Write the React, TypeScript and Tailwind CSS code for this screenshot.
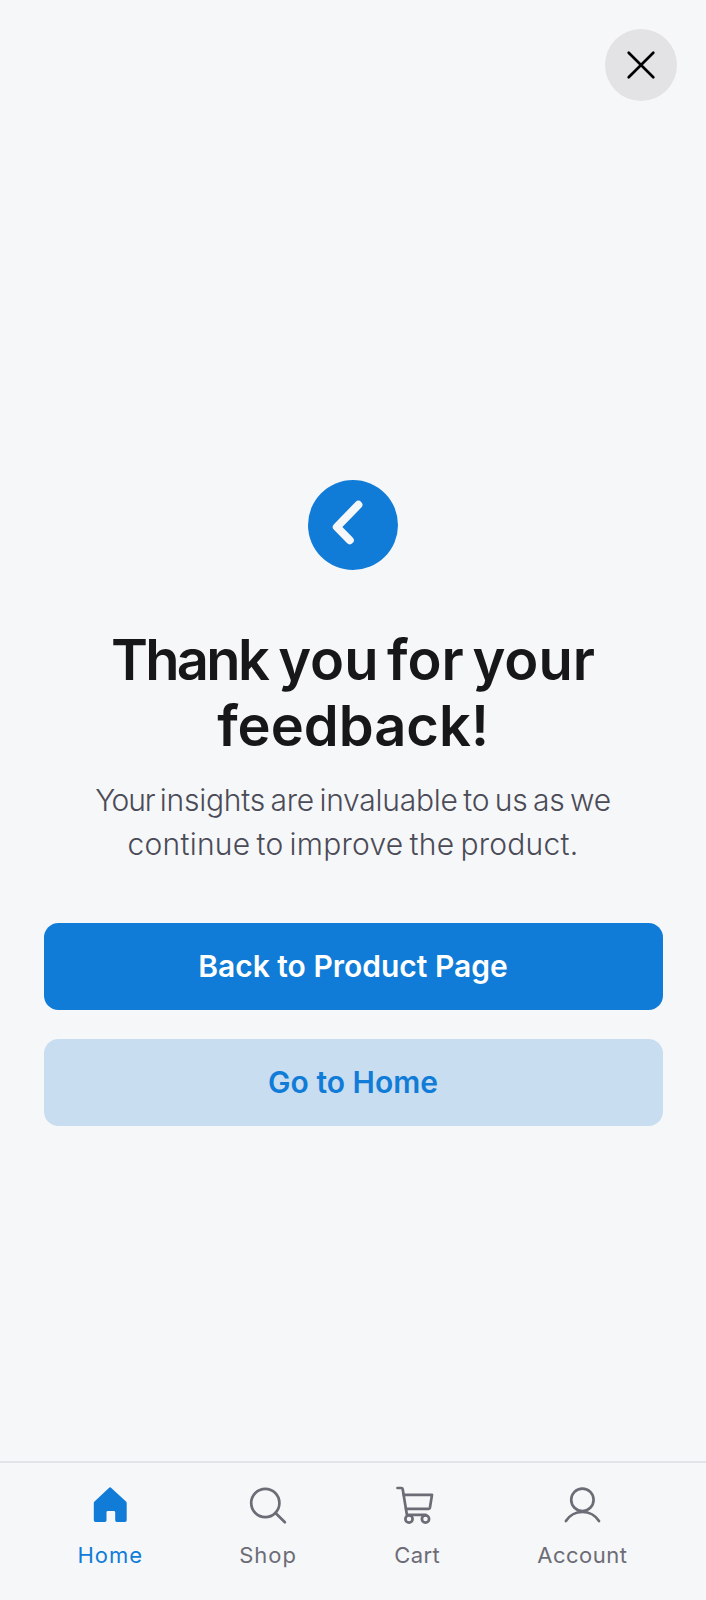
import React from 'react';

const stroke = {
  fill: 'none',
  stroke: 'currentColor',
  strokeWidth: 2.7,
  strokeLinecap: 'round' as const,
  strokeLinejoin: 'round' as const,
};

function HomeIcon() {
  return (
    <svg className="h-12 w-12" viewBox="0 0 48 48" fill="currentColor">
      <path d="M22.9 6.9a1.8 1.8 0 0 1 2.4 0L40 20.6q.7.7.7 1.7v17q0 1.7-1.7 1.7h-8.1q-1.7 0-1.7-1.7v-8q0-1.3-1.3-1.3h-6.1q-1.3 0-1.3 1.3v8q0 1.7-1.7 1.7H9.5q-1.7 0-1.7-1.7v-17q0-1 .7-1.7Z" />
    </svg>
  );
}

function SearchIcon() {
  return (
    <svg className="h-12 w-12" viewBox="0 0 48 48" {...stroke}>
      <circle cx="21.3" cy="22" r="14.1" />
      <path d="m31.5 32 9.4 9.2" />
    </svg>
  );
}

function CartIcon() {
  return (
    <svg className="h-12 w-12" viewBox="0 0 48 48" {...stroke}>
      <path d="M4.5 7h3.8q1.2 0 1.4 1.2L13.9 33.8h18.8" />
      <path d="M10.8 13.8H39l-2 12.4q-.3 1.6-1.8 1.6H13" />
      <circle cx="16" cy="38" r="3.6" />
      <circle cx="32.5" cy="38" r="3.6" />
    </svg>
  );
}

function AccountIcon() {
  return (
    <svg className="h-12 w-12" viewBox="0 0 48 48" {...stroke}>
      <circle cx="24.4" cy="18.8" r="11.2" />
      <path d="M7.9 40a19.7 19.7 0 0 1 33.1 0" />
    </svg>
  );
}

const tabs = [
  { label: 'Home', icon: <HomeIcon />, tone: 'text-[#107cd7]', spacing: 'tracking-[1px]' },
  { label: 'Shop', icon: <SearchIcon />, tone: 'text-[#6c6c76]', spacing: 'tracking-[1px]' },
  { label: 'Cart', icon: <CartIcon />, tone: 'text-[#6c6c76]', spacing: 'tracking-[0.4px]' },
  { label: 'Account', icon: <AccountIcon />, tone: 'text-[#6c6c76]', spacing: 'tracking-[0.5px]' },
];

export default function App() {
  return (
    <div className="flex h-[1600px] w-[706px] flex-col bg-[#f6f7f9] font-['Inter','Liberation_Sans',sans-serif]">
      <header className="flex h-[480px] items-start justify-end pt-[29px] pr-[29px]">
        <button aria-label="Close" className="flex h-[72px] w-[72px] items-center justify-center rounded-full bg-[#e3e3e5] text-black">
          <svg className="h-8 w-8" viewBox="0 0 32 32" fill="none" stroke="currentColor" strokeWidth="2.7" strokeLinecap="round">
            <path d="m3.7 3.7 24.6 24.6m0-24.6L3.7 28.3" />
          </svg>
        </button>
      </header>

      <main className="flex flex-1 flex-col items-center px-[43.5px] text-center">
        <svg className="h-[90px] w-[90px]" viewBox="0 0 90 90">
          <circle cx="45" cy="45" r="45" fill="#107cd7" />
          <path d="M50.4 24.8 28.8 47 41.8 60.2" fill="none" stroke="#f6f7f9" strokeWidth="8" strokeLinecap="round" strokeLinejoin="round" />
        </svg>

        <h1 className="mt-[58px] whitespace-nowrap text-[56px] leading-[65.5px] font-semibold text-[#171719] [word-spacing:-5.5px]">
          <span className="mr-[2.5px] tracking-[-2.7px]">Thank</span> you for your
          <br />
          feedback!
        </h1>

        <p className="mt-[20px] whitespace-nowrap text-[30px] leading-[43.5px] font-[350] text-[#4b4b57]">
          <span className="tracking-[-0.25px] [word-spacing:-2.6px]">
            <span className="tracking-[-1.2px]">Your</span> insights are invaluable to us as we
          </span>
          <br />
          <span className="tracking-[0.25px] [word-spacing:-2.6px]">continue to improve the product.</span>
        </p>

        <div className="mt-[57px] flex w-full flex-col gap-[29px] text-[30px] font-semibold">
          <button className="h-[87px] rounded-[14.5px] bg-[#107cd7] text-white">Back to Product Page</button>
          <button className="h-[87px] rounded-[14.5px] bg-[#c8ddf0] text-[#107cd7]">Go to Home</button>
        </div>
      </main>

      <nav className="flex h-[139px] items-start justify-between border-t-2 border-[#e3e4e7] pr-[78.5px] pl-[77.5px] pt-[18px]">
        {tabs.map((tab) => (
          <a key={tab.label} className={`flex flex-col items-center ${tab.tone}`}>
            {tab.icon}
            <span className={`mt-[12px] text-[22px] leading-[28px] ${tab.spacing}`}>{tab.label}</span>
          </a>
        ))}
      </nav>
    </div>
  );
}
